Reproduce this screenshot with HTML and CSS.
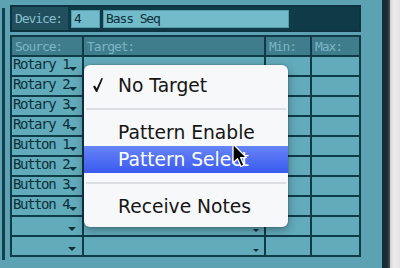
FILE: index.html
```html
<!DOCTYPE html>
<html lang="en">
<head>
  <meta charset="UTF-8">
  <meta name="viewport" content="width=device-width, initial-scale=1.0">
  <title>Remote Mapping</title>
  <link rel="stylesheet" href="styles.css">
</head>
<body>
  <div class="rack">
    <div class="rim-left"></div>
    <div class="main">
      <div class="device">
        <span class="device-label">Device:</span>
        <span class="field field-num">4</span>
        <span class="field field-name">Bass Seq</span>
        <span class="device-fill"></span>
      </div>

      <div class="grid">
        <div class="head">Source:</div>
        <div class="head">Target:</div>
        <div class="head">Min:</div>
        <div class="head">Max:</div>

        <div class="cell source">Rotary 1<span class="arrow"></span></div>
        <div class="cell target"><span class="arrow"></span></div>
        <div class="cell"></div>
        <div class="cell"></div>

        <div class="cell source">Rotary 2<span class="arrow"></span></div>
        <div class="cell target"><span class="arrow"></span></div>
        <div class="cell"></div>
        <div class="cell"></div>

        <div class="cell source">Rotary 3<span class="arrow"></span></div>
        <div class="cell target"><span class="arrow"></span></div>
        <div class="cell"></div>
        <div class="cell"></div>

        <div class="cell source">Rotary 4<span class="arrow"></span></div>
        <div class="cell target"><span class="arrow"></span></div>
        <div class="cell"></div>
        <div class="cell"></div>

        <div class="cell source">Button 1<span class="arrow"></span></div>
        <div class="cell target"><span class="arrow"></span></div>
        <div class="cell"></div>
        <div class="cell"></div>

        <div class="cell source">Button 2<span class="arrow"></span></div>
        <div class="cell target"><span class="arrow"></span></div>
        <div class="cell"></div>
        <div class="cell"></div>

        <div class="cell source">Button 3<span class="arrow"></span></div>
        <div class="cell target"><span class="arrow"></span></div>
        <div class="cell"></div>
        <div class="cell"></div>

        <div class="cell source">Button 4<span class="arrow"></span></div>
        <div class="cell target"><span class="arrow"></span></div>
        <div class="cell"></div>
        <div class="cell"></div>

        <div class="cell source"><span class="arrow"></span></div>
        <div class="cell target"><span class="arrow"></span></div>
        <div class="cell"></div>
        <div class="cell"></div>

        <div class="cell source"><span class="arrow"></span></div>
        <div class="cell target"><span class="arrow"></span></div>
        <div class="cell"></div>
        <div class="cell"></div>
      </div>
    </div>
    <div class="rim-right"></div>
    <div class="desk"></div>
  </div>

  <!-- popup menu opened from the Target column -->
  <div class="menu">
    <div class="menu-item">
      <svg class="check" width="10" height="14" viewBox="0 0 10 14">
        <path d="M0 8.5 L2 7.5 L3.6 10.5 L8.4 0 L10 0.6 L4.2 14 L3 14 Z" fill="#151515"/>
      </svg>
      No Target
    </div>
    <div class="menu-sep"></div>
    <div class="menu-item">Pattern Enable</div>
    <div class="menu-item selected">Pattern Select</div>
    <div class="menu-sep"></div>
    <div class="menu-item">Receive Notes</div>
  </div>

  <svg class="cursor" width="16" height="25" viewBox="0 0 16 25">
    <path d="M1 1 L1 20 L5.5 15.8 L9 23.5 L12 22.2 L8.6 14.6 L14.5 14.6 Z" fill="#000" stroke="#fff" stroke-width="1.3" stroke-linejoin="round"/>
  </svg>
</body>
</html>
```

FILE: styles.css
```css
/* Reset and global styles */
* {
  margin: 0;
  padding: 0;
  box-sizing: border-box;
}
body {
  width: 400px;
  height: 268px;
  overflow: hidden;
  background: #5da2b3;
  font-family: 'DejaVu Sans Mono', monospace;
  color: #0c2f3a;
}

/* rack panel */
.rack {
  display: flex;
  height: 268px;
  padding-left: 2px;
}
.rim-left {
  width: 3px;
  height: 252px;
  margin-top: 8px;
  background: #123f4c;
}
.main {
  width: 351px;
  margin-left: 5px;
  padding-top: 5px;
}
.rim-right {
  width: 8px;
  margin-left: 21px;
  background: linear-gradient(90deg, #0d2e38, #1c2b30 60%, #4a4f52);
}
.desk {
  flex: 1;
  background: linear-gradient(90deg, #cfd1d2, #ececec 40%, #e4e4e4);
}

/* device strip */
.device {
  display: flex;
  gap: 3px;
  height: 27px;
  border: 2px solid #0d3340;
  background: #0f3a48;
}
.device-label {
  width: 56px;
  padding-left: 3px;
  background: #224f5d;
  color: #86c0ce;
  font-size: 13px;
  letter-spacing: -1.1px;
  line-height: 23px;
}
.field {
  height: 18px;
  margin-top: 3px;
  padding-left: 3px;
  background: #72bbcb;
  box-shadow: inset 0 0 0 1px #5799a9;
  font-size: 13px;
  letter-spacing: -1.1px;
  line-height: 17px;
}
.field-num {
  width: 29px;
}
.field-name {
  width: 186px;
}
.device-fill {
  flex: 1;
}

/* mapping table */
.grid {
  display: grid;
  grid-template-columns: 70px 180px 44px 47px;
  grid-auto-rows: 18px;
  gap: 2px;
  margin-top: 3px;
  padding: 2px;
  background: #0f3a48;
}
.head {
  padding: 1px 0 0 3px;
  background: #3f7d8d;
  color: #7db5c3;
  font-size: 13px;
  letter-spacing: -1.1px;
  line-height: 17px;
}
.cell {
  display: flex;
  background: #62abbb;
}
.source {
  padding-left: 1px;
  font-size: 14px;
  letter-spacing: -1.4px;
  line-height: 14px;
  white-space: nowrap;
}
.arrow {
  width: 0;
  height: 0;
  margin-left: auto;
  border-left: 4px solid transparent;
  border-right: 4px solid transparent;
  border-top: 4px solid #0c2f3a;
}
.source .arrow {
  margin-top: 10px;
  margin-right: 6px;
}
.target .arrow {
  margin-top: 12px;
  margin-right: 5px;
  border-left-width: 3px;
  border-right-width: 3px;
  border-top-width: 3px;
}

/* popup menu */
.menu {
  position: absolute;
  left: 84px;
  top: 65px;
  width: 204px;
  height: 162px;
  padding: 7px 0;
  border-radius: 6px;
  background: #f7f8f9;
  box-shadow: 0 3px 10px rgba(0, 0, 0, 0.35), 0 0 0 1px rgba(0, 0, 0, 0.08);
  font-family: 'DejaVu Sans', sans-serif;
  font-size: 18.7px;
  color: #151515;
}
.menu-item {
  position: relative;
  height: 27px;
  padding-left: 34px;
  line-height: 27px;
  white-space: nowrap;
}
.menu-item.selected {
  background: linear-gradient(180deg, #6684f6, #3a5af0);
  color: #fff;
}
.check {
  position: absolute;
  left: 9px;
  top: 6px;
}
.menu-sep {
  height: 20px;
  padding-top: 9px;
}
.menu-sep::after {
  content: '';
  display: block;
  height: 2px;
  margin: 0 2px;
  background: #dcdfe1;
}

.cursor {
  position: absolute;
  left: 232px;
  top: 143px;
}
```
